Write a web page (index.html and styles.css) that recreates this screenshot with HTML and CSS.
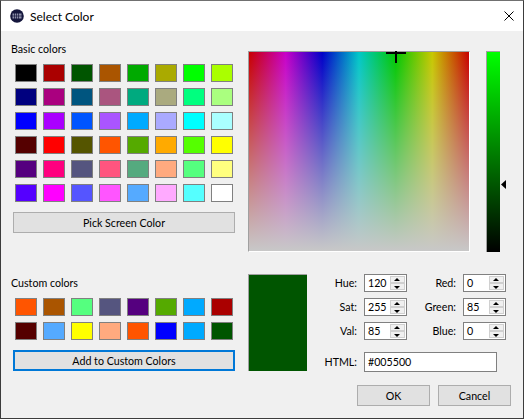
FILE: index.html
```html
<!DOCTYPE html>
<html lang="en">
<head>
<meta charset="utf-8">
<title>Select Color</title>
<link rel="stylesheet" href="styles.css">
</head>
<body>
<div class="window">
  <header class="titlebar">
    <svg class="app-icon" width="14" height="14" viewBox="0 0 14 14"><circle cx="7" cy="7" r="6.800" fill="#14163c"/><rect x="2.500" y="4.500" width="9" height="5" fill="#8d90aa"/><path d="M4.500 4v6M6.500 4v6M8.500 4v6M2 7h10" stroke="#14163c" stroke-width=".7" fill="none"/></svg>
    <span class="title">Select Color</span>
    <svg class="close" width="10" height="10" viewBox="0 0 10 10"><path d="M.5.5l9 9M9.500.5l-9 9" stroke="#000" stroke-width="1" fill="none"/></svg>
  </header>
  <main class="body">
    <div class="top">
      <section class="left">
        <div class="label">Basic colors</div>
        <div class="swatches basic">
          <i class="s" style="background:#000000"></i><i class="s" style="background:#aa0000"></i><i class="s" style="background:#005500"></i><i class="s" style="background:#aa5500"></i><i class="s" style="background:#00aa00"></i><i class="s" style="background:#aaaa00"></i><i class="s" style="background:#00ff00"></i><i class="s" style="background:#aaff00"></i>
          <i class="s" style="background:#00007f"></i><i class="s" style="background:#aa007f"></i><i class="s" style="background:#00557f"></i><i class="s" style="background:#aa557f"></i><i class="s" style="background:#00aa7f"></i><i class="s" style="background:#aaaa7f"></i><i class="s" style="background:#00ff7f"></i><i class="s" style="background:#aaff7f"></i>
          <i class="s" style="background:#0000ff"></i><i class="s" style="background:#aa00ff"></i><i class="s" style="background:#0055ff"></i><i class="s" style="background:#aa55ff"></i><i class="s" style="background:#00aaff"></i><i class="s" style="background:#aaaaff"></i><i class="s" style="background:#00ffff"></i><i class="s" style="background:#aaffff"></i>
          <i class="s" style="background:#550000"></i><i class="s" style="background:#ff0000"></i><i class="s" style="background:#555500"></i><i class="s" style="background:#ff5500"></i><i class="s" style="background:#55aa00"></i><i class="s" style="background:#ffaa00"></i><i class="s" style="background:#55ff00"></i><i class="s" style="background:#ffff00"></i>
          <i class="s" style="background:#55007f"></i><i class="s" style="background:#ff007f"></i><i class="s" style="background:#55557f"></i><i class="s" style="background:#ff557f"></i><i class="s" style="background:#55aa7f"></i><i class="s" style="background:#ffaa7f"></i><i class="s" style="background:#55ff7f"></i><i class="s" style="background:#ffff7f"></i>
          <i class="s" style="background:#5500ff"></i><i class="s" style="background:#ff00ff"></i><i class="s" style="background:#5555ff"></i><i class="s" style="background:#ff55ff"></i><i class="s" style="background:#55aaff"></i><i class="s" style="background:#ffaaff"></i><i class="s" style="background:#55ffff"></i><i class="s" style="background:#ffffff"></i>
        </div>
        <button class="btn wide pick">Pick Screen Color</button>
      </section>
      <section class="picker">
        <div class="spectrum">
          <span class="cross-h"></span><span class="cross-v"></span>
        </div>
        <div class="lum-wrap">
          <div class="lum"></div>
          <svg class="lum-arrow" width="5" height="9" viewBox="0 0 5 9"><path d="M0 4.500L5 0v9z" fill="#000"/></svg>
        </div>
      </section>
    </div>
    <div class="bottom">
      <section class="left custom">
        <div class="label">Custom colors</div>
        <div class="swatches">
          <i class="s" style="background:#ff5500"></i><i class="s" style="background:#aa5500"></i><i class="s" style="background:#55ff7f"></i><i class="s" style="background:#55557f"></i><i class="s" style="background:#55007f"></i><i class="s" style="background:#55aa00"></i><i class="s" style="background:#00aaff"></i><i class="s" style="background:#aa0000"></i>
          <i class="s" style="background:#550000"></i><i class="s" style="background:#55aaff"></i><i class="s" style="background:#ffff00"></i><i class="s" style="background:#ffaa7f"></i><i class="s" style="background:#ff5500"></i><i class="s" style="background:#0000ff"></i><i class="s" style="background:#00aaff"></i><i class="s" style="background:#005500"></i>
        </div>
        <button class="btn wide focus">Add to Custom Colors</button>
      </section>
      <div class="preview"></div>
      <section class="fields">
        <label class="f-label">Hue:</label>
        <div class="spin"><span class="val">120</span><span class="arrows"><b class="up"></b><b class="down"></b></span></div>
        <label class="f-label">Red:</label>
        <div class="spin"><span class="val">0</span><span class="arrows"><b class="up"></b><b class="down"></b></span></div>
        <label class="f-label">Sat:</label>
        <div class="spin"><span class="val">255</span><span class="arrows"><b class="up"></b><b class="down"></b></span></div>
        <label class="f-label">Green:</label>
        <div class="spin"><span class="val">85</span><span class="arrows"><b class="up"></b><b class="down"></b></span></div>
        <label class="f-label">Val:</label>
        <div class="spin"><span class="val">85</span><span class="arrows"><b class="up"></b><b class="down"></b></span></div>
        <label class="f-label">Blue:</label>
        <div class="spin"><span class="val">0</span><span class="arrows"><b class="up"></b><b class="down"></b></span></div>
        <label class="f-label html-label">HTML:</label>
        <div class="html-input">#005500</div>
      </section>
    </div>
    <footer class="actions">
      <button class="btn act">OK</button>
      <button class="btn act">Cancel</button>
    </footer>
  </main>
</div>
</body>
</html>
```
FILE: styles.css
```css
* { box-sizing: border-box; }
html, body { margin: 0; padding: 0; }
body { width: 524px; height: 419px; overflow: hidden; font-family: Lato, "Open Sans", sans-serif; font-size: 10.670px; color: #000; }
.window { width: 524px; height: 419px; border: 1px solid #3c3c3c; border-top-color: #707070; display: flex; flex-direction: column; background: #f0f0f0; }
.titlebar { height: 30px; flex: none; background: #fff; display: flex; align-items: center; padding: 0 9px; }
.app-icon { flex: none; }
.title { margin-left: 6px; flex: 1; font-size: 12px; }
.close { flex: none; }
.body { flex: 1; display: flex; flex-direction: column; padding: 0 0 0 12px; }
.top { display: flex; height: 221px; padding-top: 20px; }
.left { width: 222px; flex: none; }
.label { height: 13px; line-height: 13px; margin-top: -9px; margin-left: -2px; }
.swatches { display: grid; grid-template-columns: repeat(8, 22px); grid-auto-rows: 18px; column-gap: 6px; row-gap: 6px; padding-left: 2px; margin-top: 9px; }
.s { display: block; border: 1px solid #808080; }
.btn { display: block; background: #e1e1e1; border: 1px solid #adadad; font: inherit; color: #000; padding: 0; border-radius: 0; }
.wide { width: 222px; height: 21px; }
.pick { margin-top: 10px; }
.focus { border: 2px solid #0078d7; margin-top: 10px; }
.picker { margin-left: 13px; display: flex; height: 201px; }
.spectrum { position: relative; width: 222px; height: 201px; border: 1px solid; border-color: #a0a0a0 #fff #fff #a0a0a0; background: linear-gradient(to bottom, rgba(200,200,200,0), #c8c8c8), linear-gradient(to right, #c80000, #c800c8 16.67%, #0000c8 33.33%, #00c8c8 50%, #00c800 66.67%, #c8c800 83.33%, #c80000); }
.cross-h { position: absolute; left: 137px; top: 0; width: 20px; height: 2px; background: #000; }
.cross-v { position: absolute; left: 146px; top: -1px; width: 2px; height: 12px; background: #000; }
.lum-wrap { position: relative; margin-left: 16px; width: 14px; height: 201px; }
.lum { width: 14px; height: 201px; border-left: 1px solid #a0a0a0; border-top: 1px solid #a0a0a0; background: linear-gradient(to bottom, #00ff00, #000); }
.lum-arrow { position: absolute; left: 15px; top: 129px; }
.bottom { display: flex; height: 101px; margin-top: 18px; }
.custom .label { margin-top: 6px; }
.custom .swatches { margin-top: 9px; }
.preview { width: 59px; height: 97px; margin-left: 13px; margin-top: 4px; background: #005500; border-left: 1px solid #a0a0a0; border-top: 1px solid #a0a0a0; }
.fields { display: grid; grid-template-columns: 50px 43px 42px 43px; grid-auto-rows: 18px; row-gap: 6px; column-gap: 7px; padding-top: 4px; }
.f-label { text-align: right; line-height: 18px; }
.spin { background: #fff; border: 1px solid #808080; display: flex; align-items: stretch; }
.val { flex: 1; padding-left: 3px; line-height: 16px; }
.arrows { width: 16px; display: flex; flex-direction: column; padding: 1px 1px 1px 0; }
.arrows b { flex: 1; position: relative; background: #f0f0f0; border: 1px solid #d0d0d0; display: block; }
.arrows b::after { content: ""; position: absolute; left: 3px; border-left: 3px solid transparent; border-right: 3px solid transparent; }
.up::after { top: 1px; border-bottom: 3px solid #000; }
.down::after { top: 2px; border-top: 3px solid #000; }
.html-label { grid-column: 1; margin-top: 7px; }
.html-input { grid-column: 2 / 5; width: 133px; height: 20px; margin-top: 6px; background: #fff; border: 1px solid #808080; padding-left: 3px; line-height: 18px; }
.actions { display: flex; gap: 8px; margin-left: 344px; margin-top: 14px; }
.act { width: 73px; height: 21px; }
```
